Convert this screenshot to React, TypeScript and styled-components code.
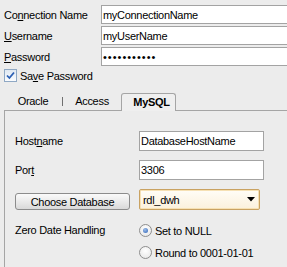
import React from 'react';
import styled, { createGlobalStyle } from 'styled-components';

const GlobalStyle = createGlobalStyle`
  html, body {
    margin: 0;
    background: #ececec;
  }

  body {
    font-family: 'Liberation Sans', Arial, sans-serif;
    font-size: 11px;
    letter-spacing: -0.3px;
    color: #000;
    overflow: hidden;
  }
`;

const Root = styled.div`
  width: 287px;
  height: 267px;
  overflow: hidden;
  padding-top: 5px;
  box-sizing: border-box;
`;

const ConnGrid = styled.div`
  display: grid;
  grid-template-columns: 97px 1fr;
  grid-auto-rows: 19px;
  row-gap: 2px;
  align-items: center;
  padding-left: 4px;
  margin-right: -4px;
`;

const Label = styled.label`
  white-space: nowrap;

  u {
    text-decoration: underline;
    text-underline-offset: 1px;
  }
`;

const TextField = styled.input<{ $tall?: boolean; $dots?: boolean }>`
  box-sizing: border-box;
  width: 100%;
  height: ${p => (p.$tall ? '20px' : '19px')};
  margin: 0;
  padding: 0 1px;
  border: 1px solid #a3a3a3;
  background: #fff;
  font: inherit;
  letter-spacing: ${p => (p.$dots ? '1px' : 'inherit')};
  color: #000;
  outline: none;
`;

const CheckRow = styled.div`
  display: flex;
  align-items: center;
  gap: 3px;
  margin: 3px 0 0 4px;
  height: 13px;
`;

const CheckBox = styled.span`
  box-sizing: border-box;
  width: 13px;
  height: 13px;
  border: 1px solid #8fa8c4;
  background: linear-gradient(#dfe8f2, #fbfcfe);
  display: flex;
  align-items: center;
  justify-content: center;
`;

const TabStrip = styled.div`
  display: flex;
  align-items: flex-end;
  height: 17px;
  margin: 11px 0 0 4px;
  position: relative;
  z-index: 1;
`;

const Tab = styled.div`
  width: 58px;
  text-align: center;
  padding-bottom: 2px;
  line-height: 13px;
`;

const TabSep = styled.span`
  width: 1px;
  height: 9px;
  margin-bottom: 4px;
  background: #707070;
`;

const ActiveTab = styled.div`
  box-sizing: border-box;
  width: 55px;
  height: 18px;
  margin-bottom: -1px;
  border: 1px solid #a5a5a5;
  border-bottom: none;
  border-radius: 3px 3px 0 0;
  background: #efefef;
  font-weight: bold;
  text-align: center;
  padding: 3px 0 0 6px;
  line-height: 11px;
`;

const Panel = styled.div`
  margin-left: 4px;
  border-top: 1px solid #a5a5a5;
  border-left: 1px solid #a5a5a5;
  padding: 20px 0 0 10px;
  height: 200px;
`;

const PanelGrid = styled.div`
  display: grid;
  grid-template-columns: 124px 125px;
  grid-template-rows: 20px 20px 21px auto;
  row-gap: 9px;
  align-items: center;
`;

const ChooseButton = styled.button`
  box-sizing: border-box;
  width: 115px;
  height: 17px;
  margin: 0;
  align-self: end;
  border: 1px solid #8c8c8c;
  border-radius: 3px;
  background: linear-gradient(#fafafa, #ececec 45%, #d9d9d9);
  font: inherit;
  letter-spacing: inherit;
  color: #000;
  padding: 0;
`;

const Combo = styled.div`
  box-sizing: border-box;
  width: 121px;
  height: 21px;
  display: flex;
  align-items: center;
  justify-content: space-between;
  padding: 0 4px 0 3px;
  border: 1px solid #c9a262;
  border-radius: 2px;
  background: linear-gradient(#fffdf7, #fbf1dc);
  box-shadow: inset 0 0 0 1px #f6e1b4;
`;

const ZeroLabel = styled.div`
  align-self: start;
  margin-top: 5px;
  line-height: 13px;
`;

const RadioGroup = styled.div`
  display: flex;
  flex-direction: column;
  gap: 9px;
  margin-top: 5px;
`;

const RadioRow = styled.div`
  display: flex;
  align-items: center;
  gap: 3px;
  height: 13px;
`;

const Radio = styled.span<{ $on?: boolean }>`
  box-sizing: border-box;
  width: 13px;
  height: 13px;
  border-radius: 50%;
  border: 1px solid #8e8e8e;
  background: radial-gradient(circle at 50% 35%, #ffffff, #e4e4e4);
  display: flex;
  align-items: center;
  justify-content: center;

  &::after {
    content: '';
    display: ${p => (p.$on ? 'block' : 'none')};
    width: 5px;
    height: 5px;
    border-radius: 50%;
    background: radial-gradient(circle at 40% 35%, #9dbde8, #2d63b8);
  }
`;

export default function App() {
  return (
    <Root>
      <GlobalStyle />
      <ConnGrid>
        <Label>Co<u>n</u>nection Name</Label>
        <TextField readOnly defaultValue="myConnectionName" />
        <Label><u>U</u>sername</Label>
        <TextField readOnly defaultValue="myUserName" />
        <Label><u>P</u>assword</Label>
        <TextField readOnly type="password" defaultValue="secretpassw" $dots />
      </ConnGrid>

      <CheckRow>
        <CheckBox>
          <svg width="9" height="9" viewBox="0 0 9 9">
            <path d="M1 4.5 L3.4 7 L8 1.5" fill="none" stroke="#2b5fb4" strokeWidth="1.8" />
          </svg>
        </CheckBox>
        <Label>Sa<u>v</u>e Password</Label>
      </CheckRow>

      <TabStrip>
        <Tab>Oracle</Tab>
        <TabSep />
        <Tab>Access</Tab>
        <ActiveTab>MySQL</ActiveTab>
      </TabStrip>

      <Panel>
        <PanelGrid>
          <Label>Host<u>n</u>ame</Label>
          <TextField readOnly defaultValue="DatabaseHostName" $tall />
          <Label>Por<u>t</u></Label>
          <TextField readOnly defaultValue="3306" $tall />
          <ChooseButton>Choose Database</ChooseButton>
          <Combo>
            <span>rdl_dwh</span>
            <svg width="8" height="5" viewBox="0 0 8 5">
              <path d="M0 0 H8 L4 4.5 Z" fill="#000" />
            </svg>
          </Combo>
          <ZeroLabel>Zero Date Handling</ZeroLabel>
          <RadioGroup>
            <RadioRow>
              <Radio $on />
              <span>Set to NULL</span>
            </RadioRow>
            <RadioRow>
              <Radio />
              <span>Round to 0001-01-01</span>
            </RadioRow>
          </RadioGroup>
        </PanelGrid>
      </Panel>
    </Root>
  );
}
